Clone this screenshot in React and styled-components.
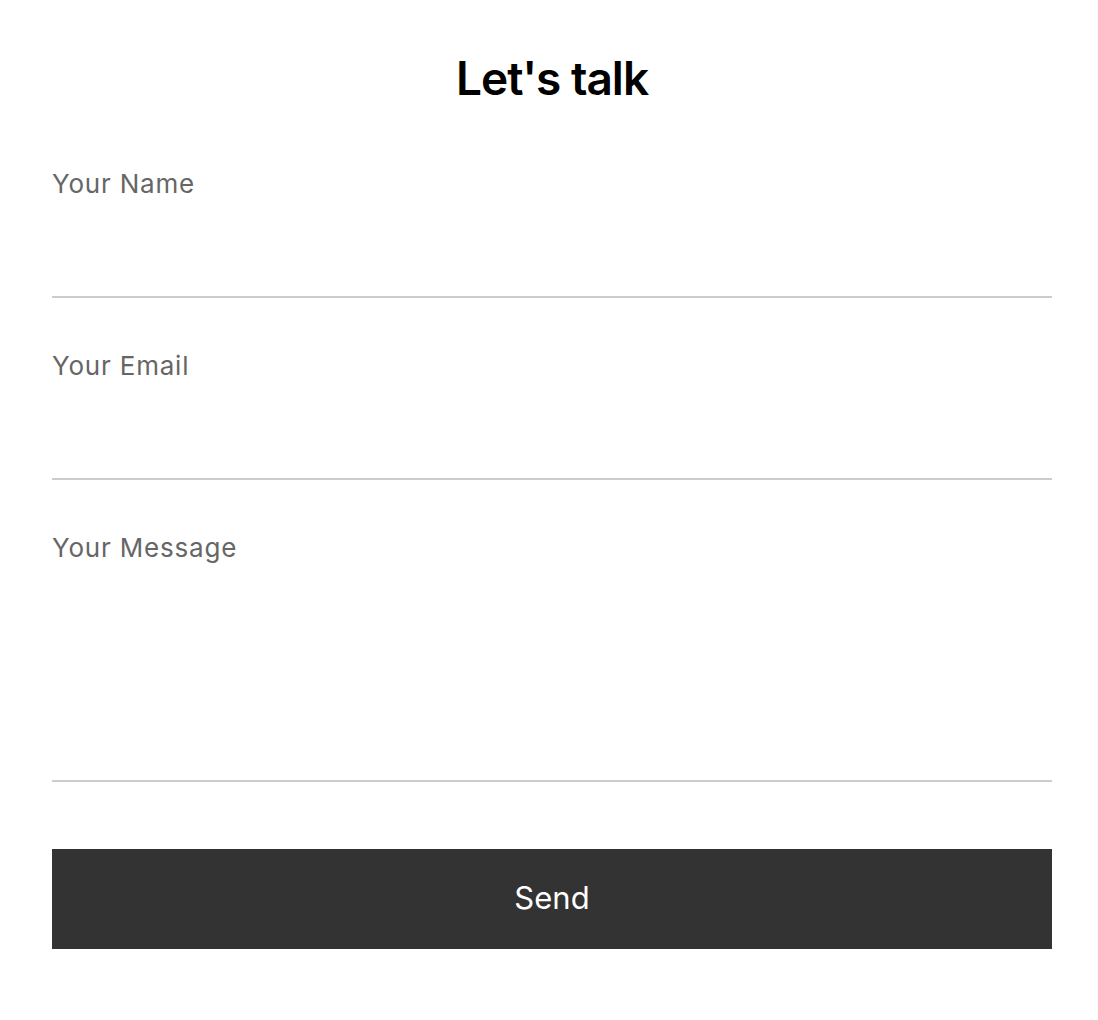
import React from "react";
import styled, { createGlobalStyle } from "styled-components";

const Global = createGlobalStyle`
  html, body { margin: 0; padding: 0; background: #fff; }
  body { font-family: Inter, "Noto Sans", "Liberation Sans", sans-serif; }
  * { box-sizing: border-box; }
`;

const Page = styled.div`
  width: 1098px;
  padding: 50px 46px 0 52px;
`;

const Form = styled.form`
  width: 1000px;
  display: flex;
  flex-direction: column;
`;

const Title = styled.h1`
  margin: 0 0 10px;
  font-size: 46px;
  line-height: 56px;
  font-weight: 600;
  color: #000;
  text-align: center;
  letter-spacing: -1px;
`;

const Field = styled.div`
  display: flex;
  flex-direction: column;
  padding-top: 52px;
`;

const Label = styled.label`
  font-size: 26px;
  line-height: 32px;
  color: #666;
  font-weight: 400;
  letter-spacing: 0.8px;
`;

const Input = styled.input`
  height: ${(p) => p.$h}px;
  border: none;
  border-bottom: 2px solid #ccc;
  outline: none;
  background: transparent;
  font: inherit;
  font-size: 26px;
  padding: 0;
`;

const Area = styled.textarea`
  height: ${(p) => p.$h}px;
  border: none;
  border-bottom: 2px solid #ccc;
  outline: none;
  background: transparent;
  font: inherit;
  font-size: 26px;
  padding: 0;
  resize: none;
`;

const Button = styled.button`
  margin-top: 67px;
  height: 100px;
  width: 100%;
  border: none;
  padding: 0 0 3px;
  background: #333;
  color: #fff;
  font-family: inherit;
  font-size: 31px;
  font-weight: 400;
  cursor: pointer;
`;

export default function App() {
  return (
    <>
      <Global />
      <Page>
        <Form onSubmit={(e) => e.preventDefault()}>
          <Title>Let's talk</Title>
          <Field>
            <Label>Your Name</Label>
            <Input $h={98} />
          </Field>
          <Field>
            <Label>Your Email</Label>
            <Input $h={98} />
          </Field>
          <Field>
            <Label>Your Message</Label>
            <Area $h={218} />
          </Field>
          <Button type="submit">Send</Button>
        </Form>
      </Page>
    </>
  );
}
